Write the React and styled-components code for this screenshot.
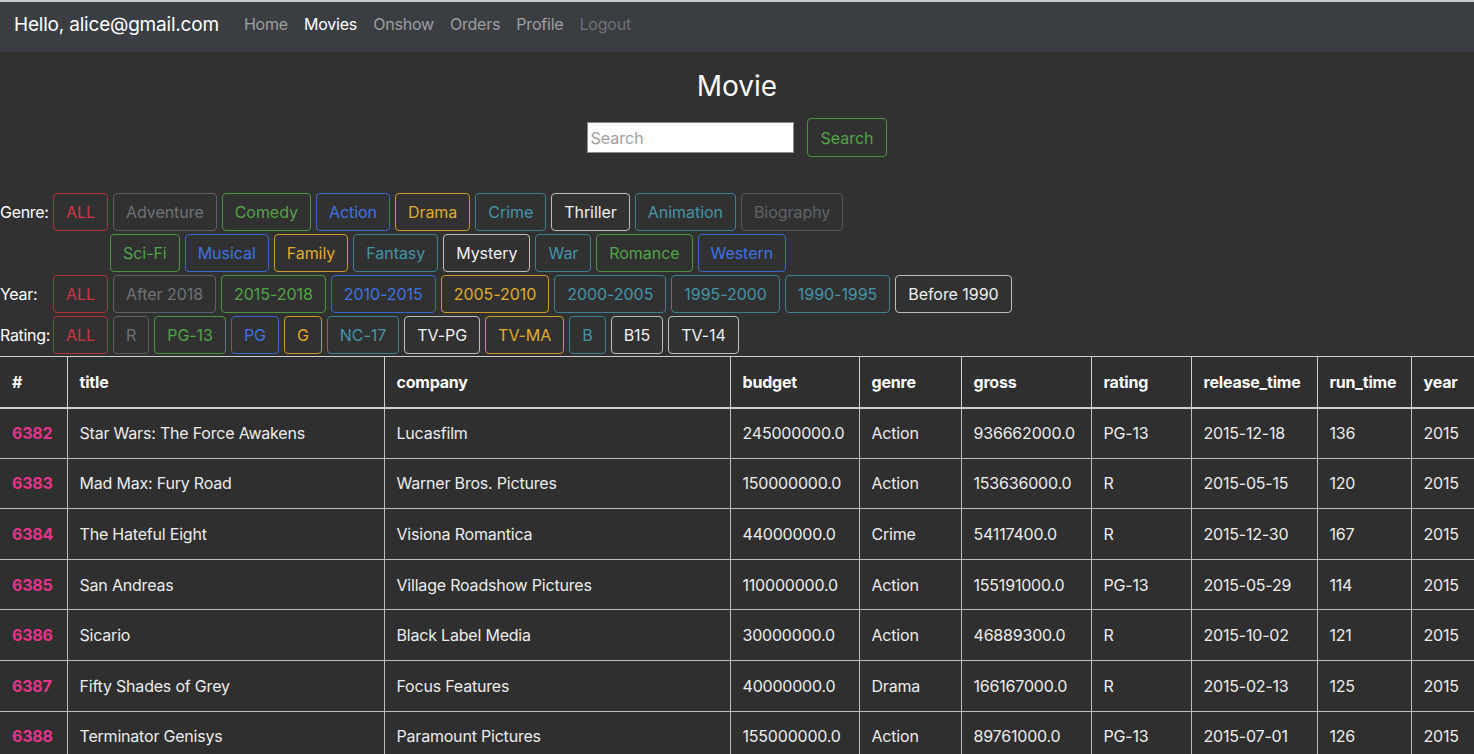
import React from "react";
import styled, { createGlobalStyle } from "styled-components";

const GlobalStyle = createGlobalStyle`
  html, body {
    margin: 0;
    padding: 0;
    height: 754px;
    overflow: hidden;
    background: #313131;
    font-family: Inter, "Liberation Sans", Arial, sans-serif;
    color: #e9e9e9;
  }
  * { box-sizing: border-box; }
`;

const colors = {
  danger: { text: "#cf3443", border: "#b52f3c" },
  secondary: { text: "#6d7277", border: "#5b6065" },
  dim: { text: "#5f6368", border: "#53575b" },
  success: { text: "#52a348", border: "#4a9441" },
  primary: { text: "#3d72e3", border: "#3766cc" },
  warning: { text: "#e0ac2b", border: "#c99a27" },
  info: { text: "#4494a6", border: "#3b8191" },
  light: { text: "#f0f0f0", border: "#bdbdbd" },
};

const Navbar = styled.nav`
  display: flex;
  align-items: center;
  height: 52px;
  padding: 0 14px 6px;
  background: #3a3d42;
  border-top: 2px solid #c9c9c9;
`;

const Brand = styled.span`
  font-size: 19px;
  letter-spacing: -0.2px;
  color: #ffffff;
  margin-right: 17px;
`;

const NavLink = styled.a`
  font-size: 16px;
  letter-spacing: -0.2px;
  padding: 0 8px;
  color: ${(p) =>
    p.$active ? "#ffffff" : p.$disabled ? "rgba(255,255,255,0.28)" : "rgba(255,255,255,0.5)"};
  text-decoration: none;
`;

const Header = styled.div`
  display: flex;
  flex-direction: column;
  align-items: center;
  padding-top: 16px;
`;

const Title = styled.h3`
  margin: 0;
  font-size: 28px;
  font-weight: 400;
  color: #ffffff;
  line-height: 36px;
`;

const SearchForm = styled.form`
  display: flex;
  align-items: center;
  gap: 13px;
  margin-top: 14px;
`;

const SearchInput = styled.input`
  width: 207px;
  height: 31px;
  border: 1px solid #8a8a8a;
  background: #ffffff;
  font-family: inherit;
  font-size: 16px;
  padding: 0 3px;
  outline: none;
  &::placeholder { color: #a0a0a0; }
`;

const OutlineButton = styled.button`
  font-family: inherit;
  font-size: 16px;
  letter-spacing: -0.05px;
  line-height: 24px;
  height: 38px;
  padding: 6px 12px;
  background: transparent;
  border: 1px solid ${(p) => colors[p.$tone].border};
  color: ${(p) => colors[p.$tone].text};
  border-radius: 4px;
  white-space: nowrap;
`;

const SearchButton = styled(OutlineButton)`
  height: 39px;
  padding: 6px 13px;
`;

const Filters = styled.div`
  display: flex;
  flex-direction: column;
  gap: 3px;
  margin-top: 36px;
`;

const FilterRow = styled.div`
  display: flex;
  align-items: center;
  gap: 5px;
  padding-left: ${(p) => p.$indent || 0}px;
`;

const Label = styled.span`
  width: 48px;
  font-size: 16px;
  letter-spacing: -0.3px;
  color: #ffffff;
`;

const Table = styled.table`
  width: 1474px;
  margin-top: 2px;
  border-collapse: collapse;
  table-layout: fixed;
  font-size: 16px;
  letter-spacing: -0.2px;
  background: #2f2f2f;
`;

const Th = styled.th`
  text-align: left;
  font-weight: 700;
  color: #ffffff;
  padding: 13px 12px 12px;
  height: 51px;
  border: 1px solid #cfcfcf;
  border-bottom: 2px solid #cfcfcf;
  white-space: nowrap;
  &:first-child { border-left: none; }
  &:last-child { border-right: none; }
`;

const Td = styled.td`
  padding: 12px;
  height: 50.6px;
  border: 1px solid #bdbdbd;
  color: ${(p) => (p.$id ? "#e3348a" : "#ececec")};
  font-weight: ${(p) => (p.$id ? 700 : 400)};
  white-space: nowrap;
  &:first-child { border-left: none; }
  &:last-child { border-right: none; }
`;

const genres1 = [
  ["ALL", "danger"], ["Adventure", "secondary"], ["Comedy", "success"], ["Action", "primary"],
  ["Drama", "warning"], ["Crime", "info"], ["Thriller", "light"], ["Animation", "info"], ["Biography", "dim"],
];
const genres2 = [
  ["Sci-Fi", "success"], ["Musical", "primary"], ["Family", "warning"], ["Fantasy", "info"],
  ["Mystery", "light"], ["War", "info"], ["Romance", "success"], ["Western", "primary"],
];
const years = [
  ["ALL", "danger"], ["After 2018", "secondary"], ["2015-2018", "success"], ["2010-2015", "primary"],
  ["2005-2010", "warning"], ["2000-2005", "info"], ["1995-2000", "info"], ["1990-1995", "info"],
  ["Before 1990", "light"],
];
const ratings = [
  ["ALL", "danger"], ["R", "secondary"], ["PG-13", "success"], ["PG", "primary"], ["G", "warning"],
  ["NC-17", "info"], ["TV-PG", "light"], ["TV-MA", "warning"], ["B", "info"], ["B15", "light"], ["TV-14", "light"],
];

const columns = [
  ["#", 67], ["title", 317], ["company", 346], ["budget", 129], ["genre", 102],
  ["gross", 130], ["rating", 100], ["release_time", 126], ["run_time", 94], ["year", 63],
];

const movies = [
  ["6382", "Star Wars: The Force Awakens", "Lucasfilm", "245000000.0", "Action", "936662000.0", "PG-13", "2015-12-18", "136", "2015"],
  ["6383", "Mad Max: Fury Road", "Warner Bros. Pictures", "150000000.0", "Action", "153636000.0", "R", "2015-05-15", "120", "2015"],
  ["6384", "The Hateful Eight", "Visiona Romantica", "44000000.0", "Crime", "54117400.0", "R", "2015-12-30", "167", "2015"],
  ["6385", "San Andreas", "Village Roadshow Pictures", "110000000.0", "Action", "155191000.0", "PG-13", "2015-05-29", "114", "2015"],
  ["6386", "Sicario", "Black Label Media", "30000000.0", "Action", "46889300.0", "R", "2015-10-02", "121", "2015"],
  ["6387", "Fifty Shades of Grey", "Focus Features", "40000000.0", "Drama", "166167000.0", "R", "2015-02-13", "125", "2015"],
  ["6388", "Terminator Genisys", "Paramount Pictures", "155000000.0", "Action", "89761000.0", "PG-13", "2015-07-01", "126", "2015"],
];

const Buttons = ({ items }) =>
  items.map(([label, tone]) => (
    <OutlineButton key={label} $tone={tone} type="button">
      {label}
    </OutlineButton>
  ));

export default function App() {
  return (
    <>
      <GlobalStyle />
      <Navbar>
        <Brand>Hello, alice@gmail.com</Brand>
        <NavLink>Home</NavLink>
        <NavLink $active>Movies</NavLink>
        <NavLink>Onshow</NavLink>
        <NavLink>Orders</NavLink>
        <NavLink>Profile</NavLink>
        <NavLink $disabled>Logout</NavLink>
      </Navbar>

      <Header>
        <Title>Movie</Title>
        <SearchForm onSubmit={(e) => e.preventDefault()}>
          <SearchInput placeholder="Search" />
          <SearchButton $tone="success" type="submit">Search</SearchButton>
        </SearchForm>
      </Header>

      <Filters>
        <FilterRow>
          <Label>Genre:</Label>
          <Buttons items={genres1} />
        </FilterRow>
        <FilterRow $indent={110}>
          <Buttons items={genres2} />
        </FilterRow>
        <FilterRow>
          <Label>Year:</Label>
          <Buttons items={years} />
        </FilterRow>
        <FilterRow>
          <Label>Rating:</Label>
          <Buttons items={ratings} />
        </FilterRow>
      </Filters>

      <Table>
        <colgroup>
          {columns.map(([name, w]) => (
            <col key={name} style={{ width: w }} />
          ))}
        </colgroup>
        <thead>
          <tr>
            {columns.map(([name]) => (
              <Th key={name}>{name}</Th>
            ))}
          </tr>
        </thead>
        <tbody>
          {movies.map((row) => (
            <tr key={row[0]}>
              {row.map((cell, i) => (
                <Td key={i} $id={i === 0}>
                  {cell}
                </Td>
              ))}
            </tr>
          ))}
        </tbody>
      </Table>
    </>
  );
}
